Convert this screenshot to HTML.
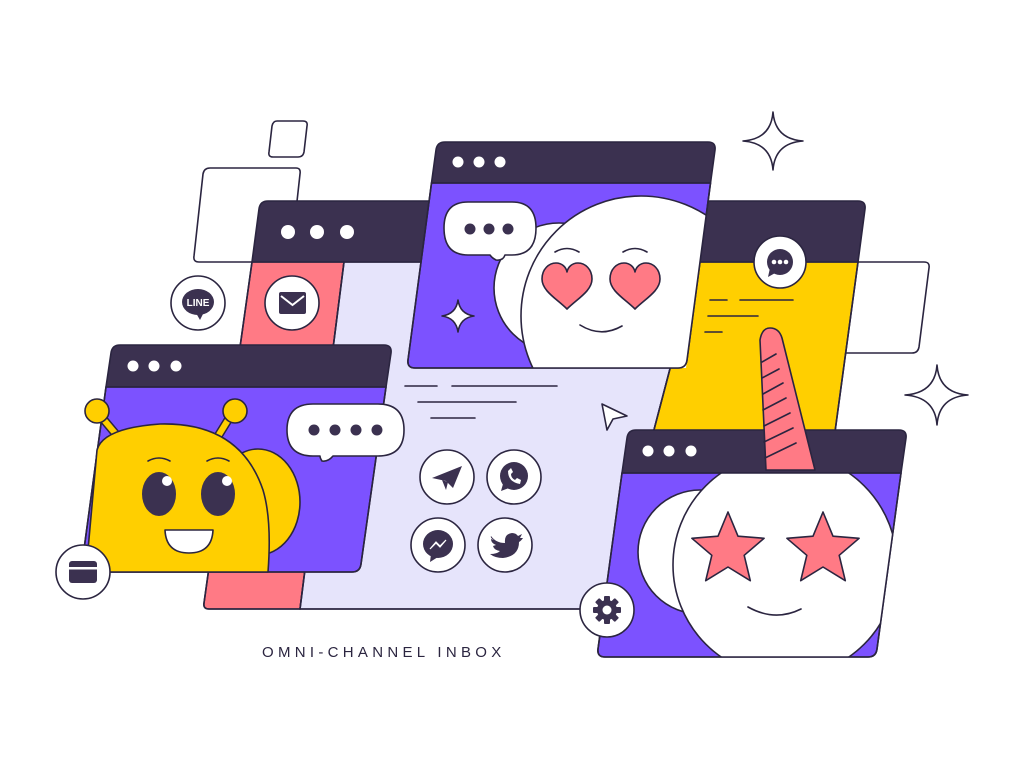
<!DOCTYPE html>
<html><head><meta charset="utf-8"><style>
html,body{margin:0;padding:0;background:#fff;width:1024px;height:768px;overflow:hidden}
svg{display:block}
</style></head><body>
<svg width="1024" height="768" viewBox="0 0 1024 768" xmlns="http://www.w3.org/2000/svg">
<defs>
<clipPath id="cm"><path d="M431.5 183 L710.5 183 L686 368 L407 368 Z"/></clipPath>
<clipPath id="cl"><path d="M106 387 L386 387 L360 572 L81 572 Z"/></clipPath>
<clipPath id="cr"><path d="M622 473 L901 473 L876 657 L597 657 Z"/></clipPath>
</defs>
<g stroke="#2b2540" stroke-width="1.6" stroke-linejoin="round" stroke-linecap="round">
<path d="M277 121 L303 121 Q308 121 307 126 L304 152 Q303 157 298 157 L273 157 Q268 157 269 152 L272 126 Q273 121 277 121 Z" fill="#fff"/>
<path d="M210 168 L296 168 Q301 168 300 174 L291 256 Q290 262 284 262 L199 262 Q193 262 194 256 L203 174 Q204 168 210 168 Z" fill="#fff"/>
<path d="M780 262 L924 262 Q930 262 929 268 L919 347 Q918 353 912 353 L780 353 Z" fill="#fff"/>
<path d="M773 112 Q775 139 803 141 Q775 143 773 170 Q771 143 743 141 Q771 139 773 112 Z" fill="#fff"/>
<path d="M937 365 Q939 393 968 395 Q939 397 937 425 Q935 397 905 395 Q935 393 937 365 Z" fill="#fff"/>
<path d="M252 262 L344 262 L300 609 L209 609 Q203 609 204 603 Z" fill="#ff7a85"/>
<path d="M344 262 L698 262 L607 609 L300 609 Z" fill="#e6e4fb"/>
<path d="M698 262 L858 262 L811 609 L607 609 Z" fill="#ffcf00"/>
<path d="M268 201 L858 201 Q866 201 865 209 L858 262 L252 262 L259 209 Q260 201 268 201 Z" fill="#3b3150"/>
<path d="M252 262 L204 603 Q203 609 209 609 L811 609 L858 262" fill="none"/>
<line x1="344" y1="262" x2="300" y2="609"/>
<line x1="698" y1="262" x2="607" y2="609"/>
<g fill="#fff" stroke="none"><circle cx="288" cy="232" r="7"/><circle cx="317" cy="232" r="7"/><circle cx="347" cy="232" r="7"/></g>
<g fill="none">
<path d="M405 386 H437 M452 386 H557 M418 402 H516 M431 418 H475"/>
<path d="M710 300 H727 M740 300 H793 M708 316 H758 M705 332 H722"/>
</g>
<path d="M602 404 L627 416 L613 419 L607 430 Z" fill="#fff"/>
<path d="M636 430 L899 430 Q907 430 906 438 L901 473 L622 473 L627 438 Q628 430 636 430 Z" fill="#3b3150"/>
<path d="M622 473 L901 473 L877 649 Q876 657 868 657 L605 657 Q597 657 598 649 Z" fill="#7c52ff"/>
<g fill="#fff" stroke="none"><circle cx="648" cy="451" r="5.5"/><circle cx="669" cy="451" r="5.5"/><circle cx="691" cy="451" r="5.5"/></g>
<path d="M760 340 Q762 328 770 328 Q779 328 782 338 L815 470 L766 470 Z" fill="#ff7a85"/>
<path d="M762 362 L776 354 M762 378 L779 369 M763 394 L783 383 M763 410 L786 398 M764 426 L790 413 M764 442 L793 428 M765 458 L796 443" fill="none"/>
<g clip-path="url(#cr)">
<circle cx="700" cy="552" r="62" fill="#fff"/>
<circle cx="785" cy="565" r="112" fill="#fff"/>
</g>
<path d="M622 473 L901 473 L877 649 Q876 657 868 657 L605 657 Q597 657 598 649 Z" fill="none"/>
<path id="st" d="M728 512 L738 536.2 L764.1 538.3 L744.2 555.3 L750.3 580.7 L728 567 L705.7 580.7 L711.8 555.3 L691.9 538.3 L718 536.2 Z" fill="#ff7a85"/>
<use href="#st" x="95"/>
<path d="M748 607 Q775 622 801 609" fill="none"/>
<path d="M445 142 L708 142 Q716 142 715 150 L710.5 183 L431.5 183 L436 150 Q437 142 445 142 Z" fill="#3b3150"/>
<path d="M431.5 183 L710.5 183 L687 360 Q686 368 678 368 L415 368 Q407 368 408 360 Z" fill="#7c52ff"/>
<g fill="#fff" stroke="none"><circle cx="458" cy="162" r="5.5"/><circle cx="479" cy="162" r="5.5"/><circle cx="500" cy="162" r="5.5"/></g>
<g clip-path="url(#cm)">
<circle cx="559" cy="288" r="65" fill="#fff"/>
<circle cx="641" cy="316" r="120" fill="#fff"/>
</g>
<path d="M431.5 183 L710.5 183 L687 360 Q686 368 678 368 L415 368 Q407 368 408 360 Z" fill="none"/>
<path d="M468 202 L512 202 Q536 202 536 228 Q536 255 512 255 L505 255 Q503 261 496 260 Q492 258 490 255 L468 255 Q444 255 444 228 Q444 202 468 202 Z" fill="#fff"/>
<g fill="#3b3150" stroke="none"><circle cx="470" cy="229" r="5.5"/><circle cx="489" cy="229" r="5.5"/><circle cx="508" cy="229" r="5.5"/></g>
<path d="M458 300 Q460 314 474 316 Q460 318 458 332 Q456 318 442 316 Q456 314 458 300 Z" fill="#fff"/>
<g fill="#ff7a85">
<path transform="translate(567,287)" d="M0 22 C-10 12 -25 4 -25 -8 C-25 -18 -18 -24 -11 -24 C-5 -24 -1 -20 0 -15 C1 -20 5 -24 11 -24 C18 -24 25 -18 25 -8 C25 4 10 12 0 22 Z"/>
<path transform="translate(635,287)" d="M0 22 C-10 12 -25 4 -25 -8 C-25 -18 -18 -24 -11 -24 C-5 -24 -1 -20 0 -15 C1 -20 5 -24 11 -24 C18 -24 25 -18 25 -8 C25 4 10 12 0 22 Z"/>
</g>
<path d="M555 252 Q567 245 579 252 M623 252 Q635 245 647 252 M580 325 Q601 338 622 326" fill="none"/>
<path d="M120 345 L384 345 Q392 345 391 353 L386 387 L106 387 L111 353 Q112 345 120 345 Z" fill="#3b3150"/>
<path d="M106 387 L386 387 L361 564 Q360 572 352 572 L89 572 Q81 572 82 564 Z" fill="#7c52ff"/>
<g fill="#fff" stroke="none"><circle cx="133" cy="366" r="5.5"/><circle cx="154" cy="366" r="5.5"/><circle cx="176" cy="366" r="5.5"/></g>
<path d="M106 387 L386 387 L361 564 Q360 572 352 572 L89 572 Q81 572 82 564 Z" fill="none"/>
<path d="M104 420 L125 445 M228 420 L212 446" fill="none" stroke-width="9" stroke="#2b2540"/>
<path d="M104 420 L125 445 M228 420 L212 446" fill="none" stroke-width="6" stroke="#ffcf00"/>
<circle cx="97" cy="411" r="12" fill="#ffcf00"/>
<circle cx="235" cy="411" r="12" fill="#ffcf00"/>
<ellipse cx="258" cy="502" rx="42" ry="53" fill="#ffcf00"/>
<path d="M86 572 L97 450 Q103 428 160 424 Q240 422 263 490 Q272 520 268 572 Z" fill="#ffcf00"/>
<g fill="#3b3150" stroke="none"><ellipse cx="159" cy="494" rx="17" ry="22"/><ellipse cx="218" cy="494" rx="17" ry="22"/></g>
<g fill="#fff" stroke="none"><circle cx="167" cy="481" r="5"/><circle cx="227" cy="481" r="5"/></g>
<path d="M148 461 Q159 455 170 461 M207 461 Q218 455 229 461" fill="none"/>
<path d="M165 530 L213 530 Q212 553 189 553 Q166 553 165 530 Z" fill="#fff"/>
<path d="M313 404 L378 404 Q404 404 404 430 Q404 456 378 456 L333 456 Q328 462 322 461 Q320 458 320 456 L313 456 Q287 456 287 430 Q287 404 313 404 Z" fill="#fff"/>
<g fill="#3b3150" stroke="none"><circle cx="314" cy="430" r="5.5"/><circle cx="335" cy="430" r="5.5"/><circle cx="356" cy="430" r="5.5"/><circle cx="377" cy="430" r="5.5"/></g>
<g fill="#fff">
<circle cx="198" cy="303" r="27"/><circle cx="292" cy="303" r="27"/><circle cx="780" cy="262" r="26"/>
<circle cx="447" cy="477" r="27"/><circle cx="514" cy="477" r="27"/><circle cx="438" cy="545" r="27"/><circle cx="505" cy="545" r="27"/>
<circle cx="83" cy="572" r="27"/><circle cx="607" cy="610" r="27"/>
</g>
</g>
<g fill="#3b3150">
<ellipse cx="198" cy="302" rx="16" ry="13"/><path d="M196 313 L200 320 L204 312 Z"/>
<text x="198" y="306" font-family="Liberation Sans, sans-serif" font-weight="bold" font-size="10" fill="#fff" text-anchor="middle">LINE</text>
<rect x="279" y="292" width="27" height="22" rx="2"/>
<path d="M281 296 L292.5 305 L304 296" fill="none" stroke="#fff" stroke-width="2"/>
<circle cx="780" cy="262" r="13"/><path d="M770 268 L768 277 L777 272 Z"/>
<g fill="#fff"><circle cx="774" cy="262" r="2.3"/><circle cx="780" cy="262" r="2.3"/><circle cx="786" cy="262" r="2.3"/></g>
<path d="M432 478 L462 466 L453 488 L446 481 Z"/>
<path d="M442 480 L446 490 L448 482 Z"/>
<circle cx="514" cy="476" r="14"/><path d="M503 484 L501 491 L509 488 Z"/>
<path d="M508 471 Q508 482 520 484 L521 480 L517 478 L515 480 Q511 478 511 474 L513 472 L511 468 Z" fill="#fff"/>
<ellipse cx="438" cy="544" rx="15" ry="14"/><path d="M431 554 L430 562 L438 557 Z"/>
<path d="M430 549 L436 542 L440 546 L446 540 L440 547 L436 543 Z" fill="#fff" stroke="#fff" stroke-width="1.2"/>
<path d="M491 536 Q496 543 505 543 Q504 534 512 533 Q516 533 518 536 L522 534 L520 538 L523 538 Q521 541 519 542 Q519 556 503 558 Q495 558 490 554 Q497 554 500 551 Q494 550 493 546 L496 545 Q491 543 491 539 L494 540 Q490 538 491 536 Z"/>
<rect x="69" y="561" width="28" height="22" rx="3"/>
<rect x="69" y="567" width="28" height="2.5" fill="#fff"/>
<g transform="translate(607,610)">
<circle r="10"/>
<g><rect x="-3" y="-14" width="6" height="28" rx="1"/><rect x="-3" y="-14" width="6" height="28" rx="1" transform="rotate(45)"/><rect x="-3" y="-14" width="6" height="28" rx="1" transform="rotate(90)"/><rect x="-3" y="-14" width="6" height="28" rx="1" transform="rotate(135)"/></g>
<circle r="4.5" fill="#fff"/>
</g>
</g>
<text x="262" y="657" font-family="Liberation Sans, sans-serif" font-size="15" letter-spacing="4.3" fill="#2b2540">OMNI-CHANNEL INBOX</text>
</svg>
</body></html>
